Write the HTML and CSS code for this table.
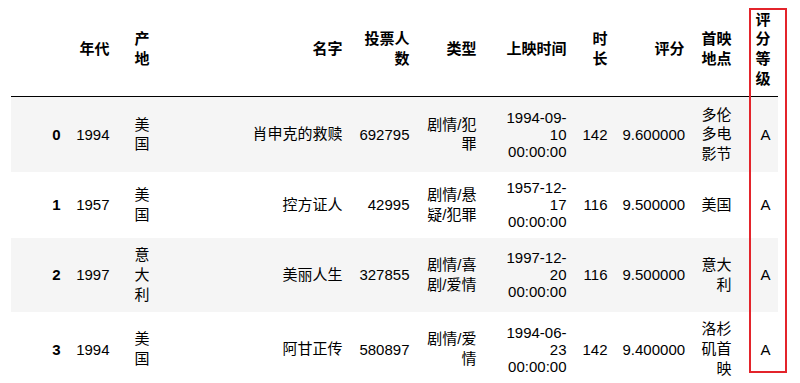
FILE: index.html
```html
<!DOCTYPE html>
<html lang="zh">
<head>
<meta charset="utf-8">
<title>DataFrame</title>
<link rel="stylesheet" href="styles.css">
</head>
<body>
<div class="output">
  <table class="dataframe">
    <colgroup>
      <col class="w-idx"><col class="w-year"><col class="w-origin"><col class="w-name"><col class="w-votes"><col class="w-type"><col class="w-date"><col class="w-len"><col class="w-score"><col class="w-place"><col class="w-grade">
    </colgroup>
    <thead>
      <tr>
        <th></th>
        <th>年代</th>
        <th>产地</th>
        <th>名字</th>
        <th>投票人数</th>
        <th>类型</th>
        <th>上映时间</th>
        <th>时长</th>
        <th>评分</th>
        <th>首映地点</th>
        <th>评分等级</th>
      </tr>
    </thead>
    <tbody>
      <tr>
        <th>0</th>
        <td>1994</td>
        <td class="cj">美国</td>
        <td class="cj">肖申克的救赎</td>
        <td>692795</td>
        <td class="cj">剧情/犯罪</td>
        <td>1994-09-10 00:00:00</td>
        <td>142</td>
        <td>9.600000</td>
        <td class="cj">多伦多电影节</td>
        <td>A</td>
      </tr>
      <tr>
        <th>1</th>
        <td>1957</td>
        <td class="cj">美国</td>
        <td class="cj">控方证人</td>
        <td>42995</td>
        <td class="cj">剧情/悬疑/犯罪</td>
        <td>1957-12-17 00:00:00</td>
        <td>116</td>
        <td>9.500000</td>
        <td class="cj">美国</td>
        <td>A</td>
      </tr>
      <tr>
        <th>2</th>
        <td>1997</td>
        <td class="cj">意大利</td>
        <td class="cj">美丽人生</td>
        <td>327855</td>
        <td class="cj">剧情/喜剧/爱情</td>
        <td>1997-12-20 00:00:00</td>
        <td>116</td>
        <td>9.500000</td>
        <td class="cj">意大利</td>
        <td>A</td>
      </tr>
      <tr>
        <th>3</th>
        <td>1994</td>
        <td class="cj">美国</td>
        <td class="cj">阿甘正传</td>
        <td>580897</td>
        <td class="cj">剧情/爱情</td>
        <td>1994-06-23 00:00:00</td>
        <td>142</td>
        <td>9.400000</td>
        <td class="cj">洛杉矶首映</td>
        <td>A</td>
      </tr>
    </tbody>
  </table>
  <div class="highlight"></div>
</div>
</body>
</html>
```
FILE: styles.css
```css
html, body {
  margin: 0;
  padding: 0;
  background: #fff;
  overflow: hidden;
}

body {
  font-family: "Liberation Sans", Arial, "Noto Sans CJK SC", sans-serif;
  font-size: 15px;
  color: #000;
}

.output {
  position: relative;
  padding: 2px 0 0 11px;
}

.dataframe {
  border-collapse: collapse;
  border-spacing: 0;
  table-layout: fixed;
  width: 767px;
  border: none;
}

.w-idx { width: 57px; }
.w-year { width: 49px; }
.w-origin { width: 40px; }
.w-name { width: 193px; }
.w-votes { width: 67px; }
.w-type { width: 67px; }
.w-date { width: 90px; }
.w-len { width: 41px; }
.w-score { width: 77px; }
.w-place { width: 47px; }
.w-grade { width: 39px; }

.dataframe th,
.dataframe td {
  text-align: right;
  vertical-align: middle;
  padding: 7.5px;
  line-height: 17px;
  border: none;
  white-space: normal;
}

.dataframe th {
  font-weight: bold;
}

.dataframe thead th {
  line-height: 19.8px;
  border-bottom: 1px solid #000;
}

.dataframe td.cj {
  line-height: 19.8px;
}

.dataframe tbody tr:nth-child(odd) {
  background: #f5f5f5;
}

.highlight {
  position: absolute;
  left: 749px;
  top: 8px;
  width: 34px;
  height: 361px;
  border: 2px solid #e3242b;
  pointer-events: none;
}
```
